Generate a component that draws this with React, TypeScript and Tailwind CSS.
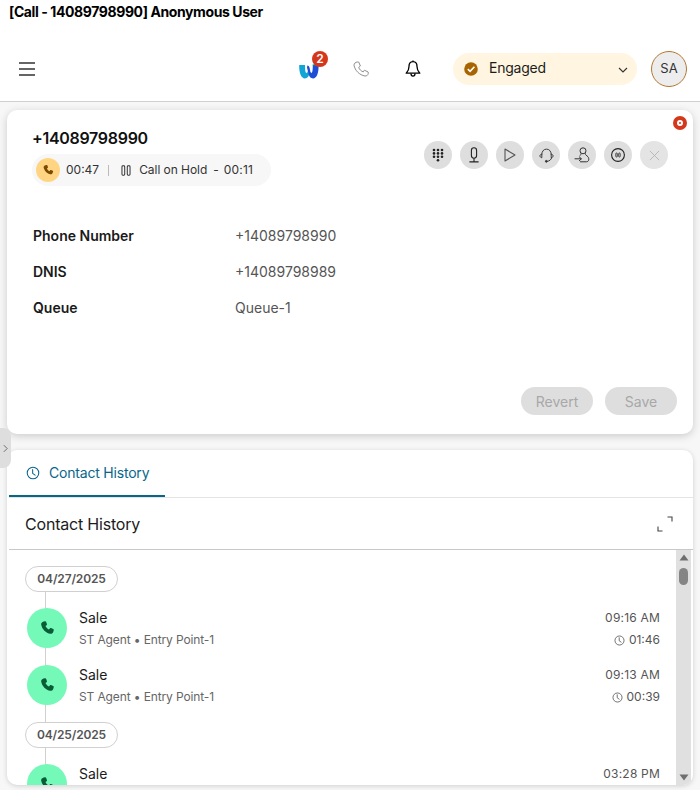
import React from "react";

const Phone = ({ className = "" }: { className?: string }) => (
  <svg viewBox="0 0 16 16" className={className} fill="currentColor">
    <path d="M4.6 1.6 L6 1.2 C6.5 1.1 6.9 1.3 7.1 1.8 L7.9 4 C8.1 4.5 8 4.9 7.6 5.2 L6.5 6 C7 7.4 8.6 9 10 9.5 L10.8 8.4 C11.1 8 11.5 7.9 12 8.1 L14.2 8.9 C14.7 9.1 14.9 9.5 14.8 10 L14.4 11.4 C14 12.9 12.7 14.1 11.3 13.8 C6.9 13 3 9.1 2.2 4.7 C1.9 3.3 3.1 2 4.6 1.6 Z" />
  </svg>
);

const Clock = ({ className = "" }: { className?: string }) => (
  <svg viewBox="0 0 16 16" className={className} fill="none" stroke="currentColor" strokeWidth="1.2">
    <circle cx="8" cy="8" r="6.6" />
    <path d="M7.6 4v4.4l2.8 2" strokeLinecap="round" strokeLinejoin="round" />
  </svg>
);

const CircleBtn = ({ children, faded }: { children: React.ReactNode; faded?: boolean }) => (
  <div className={`w-[28px] h-[28px] rounded-full flex items-center justify-center ${faded ? "bg-[#e4e4e4]" : "bg-[#dedede]"}`}>
    {children}
  </div>
);

const DatePill = ({ children }: { children: React.ReactNode }) => (
  <div className="relative z-10 w-[93px] h-[26px] rounded-full border border-[#d0d0d0] bg-white flex items-center justify-center text-[12px] font-semibold text-[#555555] tracking-[-0.15px]">
    {children}
  </div>
);

const Row = ({ time, dur, sub = true }: { time: string; dur?: string; sub?: boolean }) => (
  <div className="relative z-10 flex h-[40px] pl-[2px] pr-[16px]">
    <div className="w-[40px] h-[40px] rounded-full bg-[#75f9b8] flex items-center justify-center text-[#0a5c38] shrink-0">
      <Phone className="w-[16px] h-[16px]" />
    </div>
    <div className="ml-[12px] flex-1 min-w-0">
      <div className="flex justify-between items-center h-[20px]">
        <span className="text-[14px] leading-[20px] text-[#1c1c1c]">Sale</span>
        <span className="text-[12px] text-[#555555] tracking-[0.2px]">{time}</span>
      </div>
      {sub && (
        <div className="flex justify-between items-center h-[20px] mt-[2px]">
          <span className="text-[12px] text-[#666666] tracking-[-0.12px]">ST Agent • Entry Point-1</span>
          <span className="flex items-center gap-[4px] text-[12px] text-[#555555]">
            <Clock className="w-[11px] h-[11px]" />
            {dur}
          </span>
        </div>
      )}
    </div>
  </div>
);

const Field = ({ label, value }: { label: string; value: string }) => (
  <div className="flex items-center h-[36px] pl-[26px]">
    <span className="w-[202px] text-[14px] font-semibold text-[#1a1a1a]">{label}</span>
    <span className="text-[14px] text-[#555555]">{value}</span>
  </div>
);

export default function App() {
  return (
    <div className="relative w-[700px] h-[790px] overflow-hidden bg-white flex flex-col font-['Inter','Liberation_Sans',sans-serif]">
      <div className="h-[36px] shrink-0 pl-[9px] pt-[3px] text-[14px] leading-[18px] font-bold text-black tracking-[-0.4px]">
        [Call - 14089798990] Anonymous User
      </div>

      <header className="h-[66px] shrink-0 border-b border-[#d0d0d0] flex items-center pl-[19px] pr-[13px] bg-white">
        <svg viewBox="0 0 16 14" className="w-[16px] h-[14px] text-[#333333]" fill="none" stroke="currentColor" strokeWidth="1.6">
          <path d="M0 1h16M0 7h16M0 13h16" />
        </svg>
        <div className="relative ml-[264px] w-[20px] h-[18px] mt-[2px]">
          <svg viewBox="0 0 20 18" className="w-[20px] h-[18px]">
            <path d="M0.2 4 H6 C6 9 6.4 12 7.6 12 C8.4 12 8.8 10.6 9.2 8.6 L10.2 13.6 C9.6 16 8.2 17.4 6 17.4 C2 17.4 0 11.6 0.2 4 Z" fill="#12a5d6" />
            <path d="M19.6 4 H13.8 C13.8 9 13.4 12 12.4 12 C11.4 12 11.2 10 10.8 7.8 C10.4 5.4 9.6 4.4 8.4 4.4 L8 6.6 L9.8 13.8 C10.6 16 11.8 17.4 14 17.4 C18 17.4 19.8 11.6 19.6 4 Z" fill="#1c4fd6" />
            <path d="M12.8 4.2 L16.6 1.4 L18.4 4.2 Z" fill="#3ccf8e" />
          </svg>
          <div className="absolute -top-[10px] left-[13px] w-[16px] h-[16px] rounded-full bg-[#d4371c] text-white text-[12px] font-semibold flex items-center justify-center">2</div>
        </div>
        <svg viewBox="0 0 16 16" className="ml-[34px] w-[16px] h-[16px] text-[#8f8f8f]" fill="none" stroke="currentColor" strokeWidth="1" strokeLinejoin="round">
          <path d="M4.2 1 L5.7 1 L7.4 5 L5.7 6.4 C6.4 8.4 8.2 10.2 10.2 10.9 L11.4 9.2 L15.2 11 L15.2 12.6 C15 14.2 13.6 15.2 12 15 C6.4 14 2 9.6 1 4.2 C0.9 2.6 2.6 1.2 4.2 1 Z" />
        </svg>
        <svg viewBox="0 0 16 18" className="ml-[36px] w-[16px] h-[18px] text-black" fill="none" stroke="currentColor" strokeWidth="1.3" strokeLinejoin="round">
          <path d="M8 1.6 C4.8 1.6 4 4 4 6.4 C4 9.6 3 11.4 1.2 13.2 H14.8 C13 11.4 12 9.6 12 6.4 C12 4 11.2 1.6 8 1.6 Z" />
          <path d="M8 0.4 V1.6 M6 13.6 C6 15.4 6.8 16.2 8 16.2 C9.2 16.2 10 15.4 10 13.6" />
        </svg>
        <div className="ml-[32px] w-[184px] h-[32px] rounded-full bg-[#fff5e0] flex items-center pl-[11px] pr-[9px]">
          <svg viewBox="0 0 14 14" className="w-[14px] h-[14px]">
            <circle cx="7" cy="7" r="6.8" fill="#a86400" />
            <path d="M3.8 7.2 L6.1 9.4 L10.4 4.8" fill="none" stroke="#ffffff" strokeWidth="1.6" />
          </svg>
          <span className="ml-[11px] flex-1 text-[14px] leading-[18px] mb-[2px] text-[#1c1c1c] tracking-[-0.25px]">Engaged</span>
          <svg viewBox="0 0 10 6" className="w-[10px] h-[6px] text-[#333333] mt-[2px]" fill="none" stroke="currentColor" strokeWidth="1.1">
            <path d="M1 1l4 4 4-4" />
          </svg>
        </div>
        <div className="ml-[14px] w-[36px] h-[36px] rounded-full bg-[#ededed] border border-[#b5762f] flex items-center justify-center text-[13px] text-[#333333]">SA</div>
      </header>

      <main className="flex-1 min-h-0 bg-[#f7f7f7] px-[7px] pt-[8px] pb-[5px] flex flex-col gap-[16px]">
        <section className="relative h-[324px] shrink-0 bg-white rounded-[10px] shadow-[0_2px_8px_rgba(0,0,0,0.18)] flex flex-col">
          <div className="absolute top-[6px] right-[6px] w-[14px] h-[14px] rounded-full bg-[#d4371c] flex items-center justify-center">
            <div className="w-[6px] h-[6px] rounded-full border-[2px] border-white" />
          </div>
          <div className="flex justify-between pl-[25px] pr-[25px] pt-[18px]">
            <div>
              <div className="text-[16px] leading-[20px] font-semibold text-[#111111] tracking-[-0.3px]">+14089798990</div>
              <div className="mt-[6px] w-[239px] h-[32px] rounded-full bg-[#f7f7f7] flex items-center pl-[4px] text-[12px] text-[#333333]">
                <div className="w-[24px] h-[24px] rounded-full bg-[#ffd584] flex items-center justify-center text-[#7a4a00]">
                  <Phone className="w-[12px] h-[12px]" />
                </div>
                <span className="ml-[6px]">00:47</span>
                <span className="ml-[9px] w-px h-[11px] bg-[#bbbbbb]" />
                <svg viewBox="0 0 10 12" className="ml-[12px] w-[10px] h-[11px] text-[#333333]" fill="none" stroke="currentColor" strokeWidth="1.1">
                  <rect x="0.6" y="0.8" width="3" height="10.4" rx="1" />
                  <rect x="6.4" y="0.8" width="3" height="10.4" rx="1" />
                </svg>
                <span className="ml-[8px] tracking-[-0.05px]">Call on Hold</span>
                <span className="ml-[6px]">-</span>
                <span className="ml-[5px] tracking-[0.2px]">00:11</span>
              </div>
            </div>
            <div className="flex gap-[8px] mt-[13px]">
              <CircleBtn>
                <svg viewBox="0 0 12 14" className="w-[12px] h-[14px] text-[#222222]" fill="currentColor">
                  <circle cx="2" cy="2" r="1.3" /><circle cx="6" cy="2" r="1.3" /><circle cx="10" cy="2" r="1.3" />
                  <circle cx="2" cy="5.4" r="1.3" /><circle cx="6" cy="5.4" r="1.3" /><circle cx="10" cy="5.4" r="1.3" />
                  <circle cx="2" cy="8.8" r="1.3" /><circle cx="6" cy="8.8" r="1.3" /><circle cx="10" cy="8.8" r="1.3" />
                  <circle cx="6" cy="12.2" r="1.3" />
                </svg>
              </CircleBtn>
              <CircleBtn>
                <svg viewBox="0 0 12 16" className="w-[12px] h-[16px] text-[#222222]" fill="none" stroke="currentColor" strokeWidth="1.1">
                  <rect x="3.4" y="0.8" width="5.2" height="10.4" rx="2.6" />
                  <path d="M6 11.2v3.2M1.4 14.9h9.2" />
                </svg>
              </CircleBtn>
              <CircleBtn>
                <svg viewBox="0 0 12 14" className="w-[12px] h-[14px] text-[#555555]" fill="none" stroke="currentColor" strokeWidth="1.1">
                  <path d="M1 1 L11 7 L1 13 Z" strokeLinejoin="round" />
                </svg>
              </CircleBtn>
              <CircleBtn>
                <svg viewBox="0 0 16 16" className="w-[15px] h-[15px] text-[#333333]" fill="none" stroke="currentColor" strokeWidth="1">
                  <path d="M3 7 C3 3.6 5 1.2 8 1.2 C11 1.2 13 3.6 13 7" />
                  <path d="M13.6 10 C13 12.6 11 14 8.6 14.2" />
                  <path d="M3 6.4 C1.6 6.8 1 7.6 1 8.4 C1 9.4 1.8 10.2 3 10.4 Z" />
                  <path d="M13 6.4 C14.4 6.8 15 7.6 15 8.4 C15 9.4 14.2 10.2 13 10.4 Z" />
                  <circle cx="7.8" cy="14.2" r="1" fill="currentColor" />
                </svg>
              </CircleBtn>
              <CircleBtn>
                <svg viewBox="0 0 16 16" className="w-[16px] h-[16px] text-[#333333]" fill="none" stroke="currentColor" strokeWidth="1">
                  <circle cx="9" cy="3.8" r="3" />
                  <path d="M6.8 6.6 C7 7.8 6.4 8.2 5.8 8.8 M11.4 6.4 C11 8 12.8 8.4 14 9.8 C15.4 11.6 15 14.8 12.4 14.8 H6" />
                  <path d="M0.6 11.8 H7.4 M5 9.6 L7.4 11.8 L5 14" />
                </svg>
              </CircleBtn>
              <CircleBtn>
                <svg viewBox="0 0 16 16" className="w-[16px] h-[16px] text-[#222222]" fill="none" stroke="currentColor" strokeWidth="1.1">
                  <circle cx="8" cy="8" r="6.4" />
                  <rect x="5.8" y="6" width="1.5" height="4" rx="0.6" strokeWidth="0.8" />
                  <rect x="8.7" y="6" width="1.5" height="4" rx="0.6" strokeWidth="0.8" />
                </svg>
              </CircleBtn>
              <CircleBtn faded>
                <svg viewBox="0 0 12 12" className="w-[11px] h-[11px] text-[#b4b4b4]" fill="none" stroke="currentColor" strokeWidth="1">
                  <path d="M1 1l10 10M11 1L1 11" />
                </svg>
              </CircleBtn>
            </div>
          </div>
          <div className="mt-[31px]">
            <Field label="Phone Number" value="+14089798990" />
            <Field label="DNIS" value="+14089798989" />
            <Field label="Queue" value="Queue-1" />
          </div>
          <div className="mt-auto flex justify-end gap-[12px] pr-[16px] pb-[19px]">
            <div className="w-[72px] h-[28px] rounded-full bg-[#dedede] text-[#a8a8a8] text-[14px] flex items-center justify-center">Revert</div>
            <div className="w-[72px] h-[28px] rounded-full bg-[#dedede] text-[#a8a8a8] text-[14px] flex items-center justify-center">Save</div>
          </div>
        </section>

        <section className="flex-1 min-h-0 bg-white rounded-[10px] shadow-[0_1px_5px_rgba(0,0,0,0.16)] flex flex-col overflow-hidden">
          <div className="h-[48px] shrink-0 ml-[2px] border-b border-[#e4e4e4] flex">
            <div className="w-[156px] h-[47px] border-b-[2px] border-[#07668a] flex items-center pl-[17px] text-[#07668a]">
              <Clock className="w-[14px] h-[14px]" />
              <span className="ml-[9px] text-[14px] tracking-[-0.2px]">Contact History</span>
            </div>
          </div>
          <div className="h-[52px] shrink-0 ml-[2px] border-b border-[#c8c8c8] flex items-center justify-between pl-[16px] pr-[20px]">
            <span className="text-[16px] text-[#1c1c1c] tracking-[-0.2px]">Contact History</span>
            <svg viewBox="0 0 16 16" className="w-[16px] h-[16px] text-[#444444]" fill="none" stroke="currentColor" strokeWidth="1.1">
              <path d="M10.5 1H15V5.5M5.5 15H1V10.5" />
            </svg>
          </div>
          <div className="flex-1 min-h-0 flex ml-[2px]">
            <div className="relative flex-1 min-w-0 overflow-hidden pl-[16px] pt-[16px]">
              <div className="absolute left-[36px] top-[30px] bottom-0 w-px bg-[#d0d0d0]" />
              <DatePill>04/27/2025</DatePill>
              <div className="mt-[16px]"><Row time="09:16 AM" dur="01:46" /></div>
              <div className="mt-[17px]"><Row time="09:13 AM" dur="00:39" /></div>
              <div className="mt-[17px]"><DatePill>04/25/2025</DatePill></div>
              <div className="mt-[16px]"><Row time="03:28 PM" sub={false} /></div>
            </div>
            <div className="w-[15px] shrink-0 mr-[2px] bg-[#e0e0e0] flex flex-col items-center py-[4px]">
              <svg viewBox="0 0 10 7" className="w-[10px] h-[7px] text-[#6e6e6e]" fill="currentColor"><path d="M5 0.5 L9.5 6.5 H0.5 Z" /></svg>
              <div className="mt-[7px] w-[9px] h-[17px] rounded-full bg-[#858585]" />
              <svg viewBox="0 0 10 7" className="mt-auto w-[10px] h-[7px] text-[#6e6e6e]" fill="currentColor"><path d="M5 6.5 L9.5 0.5 H0.5 Z" /></svg>
            </div>
          </div>
        </section>
      </main>

      <div className="absolute left-0 top-[428px] w-[11px] h-[40px] bg-[#dedede] rounded-r-[8px] flex items-center justify-center">
        <svg viewBox="0 0 6 10" className="w-[5px] h-[9px] text-[#555555]" fill="none" stroke="currentColor" strokeWidth="1">
          <path d="M1 1l4 4-4 4" />
        </svg>
      </div>
    </div>
  );
}
